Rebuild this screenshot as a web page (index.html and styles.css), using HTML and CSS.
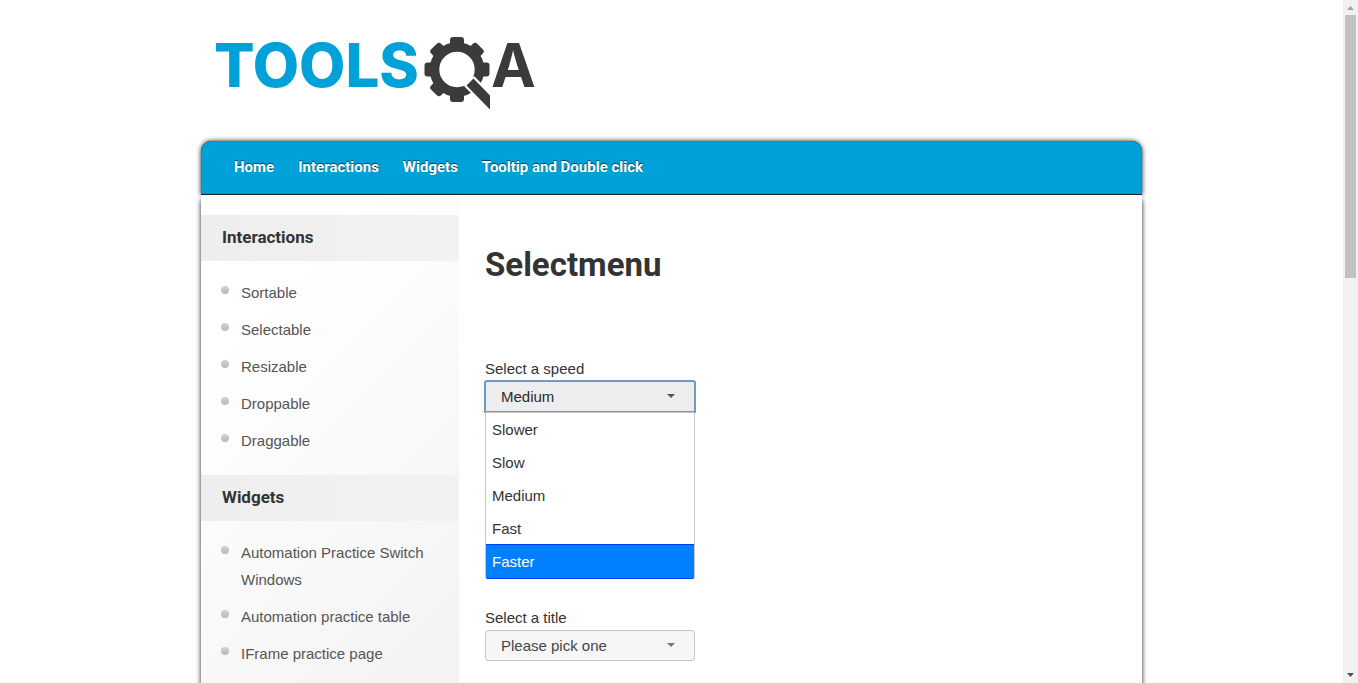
FILE: index.html
```html
<!DOCTYPE html>
<html lang="en">
<head>
<meta charset="utf-8">
<title>Selectmenu</title>
<link rel="stylesheet" href="styles.css">
</head>
<body>
<div class="window">
  <div class="viewport">
    <div class="page">
      <header class="masthead">
        <a class="logo" href="#" aria-label="ToolsQA">
          <svg width="336" height="90" viewBox="210 24 336 90" aria-hidden="true">
            <text class="logo-tools" x="214" y="87">TOOLS</text>
            <g fill="#3b3b3c">
              <path id="tooth" d="M448 48 L450 43 V40 Q450 37 453 37 H461 Q464 37 464 40 V43 L466 48 Z"/>
              <use href="#tooth" transform="rotate(45 457 69.5)"/>
              <use href="#tooth" transform="rotate(90 457 69.5)"/>
              <use href="#tooth" transform="rotate(180 457 69.5)"/>
              <use href="#tooth" transform="rotate(225 457 69.5)"/>
              <use href="#tooth" transform="rotate(270 457 69.5)"/>
              <use href="#tooth" transform="rotate(315 457 69.5)"/>
              <circle cx="457" cy="69.5" r="22.500" fill="none" stroke="#3b3b3c" stroke-width="9.600"/>
              <path d="M464 86 L474 76 L494 96 V112 H490Z" fill="#fff"/>
              <path d="M466.500 85.500 L473.500 78.500 L490 95.500 V109.500 Z"/>
            </g>
            <text class="logo-a" x="491" y="87">A</text>
          </svg>
        </a>
      </header>
      <nav class="nav">
        <a href="#">Home</a>
        <a href="#">Interactions</a>
        <a href="#">Widgets</a>
        <a href="#">Tooltip and Double click</a>
      </nav>
      <div class="body">
        <aside class="sidebar">
          <h2>Interactions</h2>
          <ul>
            <li><a href="#">Sortable</a></li>
            <li><a href="#">Selectable</a></li>
            <li><a href="#">Resizable</a></li>
            <li><a href="#">Droppable</a></li>
            <li><a href="#">Draggable</a></li>
          </ul>
          <h2>Widgets</h2>
          <ul>
            <li><a href="#">Automation Practice Switch Windows</a></li>
            <li><a href="#">Automation practice table</a></li>
            <li><a href="#">IFrame practice page</a></li>
          </ul>
        </aside>
        <main class="content">
          <h1>Selectmenu</h1>
          <form class="demo">
            <div class="field">
              <label for="speed">Select a speed</label>
              <div class="picker open">
                <select id="speed">
                  <option>Slower</option>
                  <option>Slow</option>
                  <option selected>Medium</option>
                  <option>Fast</option>
                  <option>Faster</option>
                </select>
                <svg class="arrow" width="8" height="4" viewBox="0 0 8 4" aria-hidden="true"><path d="M0 0H8L4 4Z"/></svg>
                <ul class="menu" role="listbox" aria-label="Select a speed">
                  <li role="option">Slower</li>
                  <li role="option">Slow</li>
                  <li role="option">Medium</li>
                  <li role="option">Fast</li>
                  <li class="active" role="option" aria-selected="true">Faster</li>
                </ul>
              </div>
            </div>
            <div class="field">
              <label for="title">Select a title</label>
              <div class="picker">
                <select id="title">
                  <option>Please pick one</option>
                </select>
                <svg class="arrow" width="8" height="4" viewBox="0 0 8 4" aria-hidden="true"><path d="M0 0H8L4 4Z"/></svg>
              </div>
            </div>
          </form>
        </main>
      </div>
    </div>
  </div>
  <div class="scrollbar" aria-hidden="true">
    <svg width="15" height="15" viewBox="0 0 15 15"><path d="M4 10L7.500 6L11 10Z" fill="#a3a3a3"/></svg>
    <div class="track"><div class="thumb"></div></div>
    <svg width="15" height="15" viewBox="0 0 15 15"><path d="M4 5L7.500 9L11 5Z" fill="#505050"/></svg>
  </div>
</div>
</body>
</html>
```
FILE: styles.css
```css
* {
  box-sizing: border-box;
}

body {
  margin: 0;
  background: #fff;
  color: #333;
  font: 15px/27px "Liberation Sans", Arial, sans-serif;
}

a {
  color: inherit;
  text-decoration: none;
}

ul {
  margin: 0;
  padding: 0;
  list-style: none;
}

.window {
  display: flex;
  height: 100vh;
}

.viewport {
  flex: 1;
  overflow: hidden;
}

.page {
  display: flex;
  flex-direction: column;
  max-width: 941px;
  min-height: 100%;
  margin: 0 auto;
}

.masthead {
  padding: 24px 9px 27px;
}

.logo,
.logo svg {
  display: block;
}

.logo {
  width: max-content;
}

.logo svg {
  overflow: visible;
}

.logo-tools {
  fill: #00a1d9;
  font: 800 60px Inter, sans-serif;
}

.logo-a {
  fill: #3b3b3c;
  font: 700 60px Inter, sans-serif;
}

.nav {
  display: flex;
  gap: 24px;
  padding: 13px 33px;
  border-bottom: 1px solid #222;
  border-radius: 10px 10px 0 0;
  background: #00a1d9;
  box-shadow: 0 0 5px #222, inset 0 0 1px #222;
  color: #fff;
  font: bold 15px/27px Roboto, sans-serif;
  text-shadow: 0 -1px 1px #00374a;
}

.body {
  display: flex;
  flex: 1;
  background: #fff;
  box-shadow: 0 5px 5px #222;
}

.sidebar {
  flex: 0 0 258px;
  padding-top: 20px;
  background: linear-gradient(135deg, #fff 20%, #f2f2f2);
}

.sidebar h2 {
  margin: 0;
  padding: 9px 21px 10px;
  background: linear-gradient(90deg, #eee, #f2f2f2);
  font: bold 17px/27px Roboto, sans-serif;
}

.sidebar ul {
  display: grid;
  gap: 10px;
  padding: 18px 20px 21px;
  color: #555;
}

.sidebar li {
  display: grid;
  grid-template-columns: 8px 1fr;
  gap: 12px;
}

.sidebar li::before {
  content: "";
  width: 8px;
  height: 8px;
  margin-top: 7px;
  border-radius: 50%;
  background: linear-gradient(#d2d2d2, #b8b8b8);
}

.content {
  flex: 1;
  padding: 50px 26px;
}

h1 {
  margin: 0;
  font: bold 33px/40px Roboto, sans-serif;
}

.demo {
  display: grid;
  gap: 196px;
  margin-top: 74px;
}

.field label {
  display: block;
  margin-bottom: 2px;
  line-height: 20px;
}

.picker {
  position: relative;
  width: 210px;
}

.picker select {
  display: block;
  width: 100%;
  height: 31px;
  padding: 0 30px 0 15px;
  border: 1px solid #c5c5c5;
  border-radius: 3px;
  appearance: none;
  background: #f6f6f6;
  color: #454545;
  font: inherit;
}

.picker.open select {
  border-color: #6a9cc5;
  border-radius: 2px 2px 0 0;
  background: #ededed;
  box-shadow: 0 0 0 1px #6a9cc5;
  color: #2b2b2b;
}

.arrow {
  position: absolute;
  top: 13px;
  right: 20px;
  fill: #777;
}

.open .arrow {
  fill: #555;
}

.menu {
  position: absolute;
  top: 100%;
  left: 0;
  width: 100%;
  border: 1px solid #c5c5c5;
  border-radius: 0 0 3px 3px;
  background: #fff;
}

.menu li {
  padding: 3px 6px;
}

.menu .active {
  margin: -1px 0;
  border-top: 1px solid #003eff;
  border-bottom: 1px solid #003eff;
  border-radius: 0 0 2px 2px;
  background: #007fff;
  color: #fff;
}

.scrollbar {
  display: flex;
  flex: 0 0 15px;
  flex-direction: column;
  background: #f1f1f1;
}

.track {
  flex: 1;
  padding: 0 2px;
}

.thumb {
  height: 40.3%;
  background: #c1c1c1;
}
```
